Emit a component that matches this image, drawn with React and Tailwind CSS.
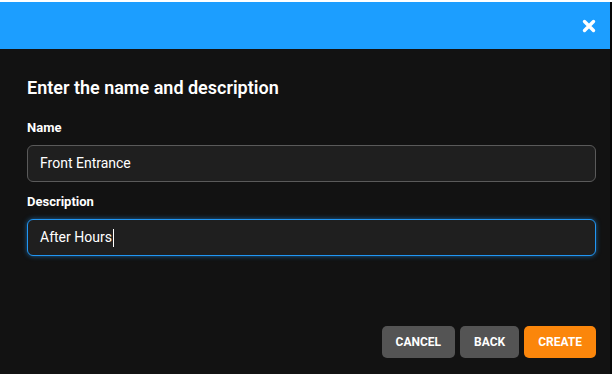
import React from "react";

// ── Close glyph (bold X) ──────────────────────────────────────────────────
function CloseIcon() {
  return (
    <svg width="14" height="14" viewBox="0 0 14 14" aria-hidden="true">
      <path
        d="M2.5 2.5 L11.5 11.5 M11.5 2.5 L2.5 11.5"
        stroke="#fff"
        strokeWidth="3.4"
        strokeLinecap="round"
      />
    </svg>
  );
}

function Field({ label, value, focused }) {
  return (
    <div className="flex flex-col">
      <label className="text-[13px] font-bold text-white leading-4 mb-[9px]">
        {label}
      </label>
      <div
        className={`h-[37px] rounded-[6px] bg-[#1f1f1f] flex items-center px-[12px] text-[14px] text-white ${
          focused
            ? "border border-[#2196f3] shadow-[0_0_5px_rgba(33,150,243,0.6)]"
            : "border border-[#5a5a5a]"
        }`}
      >
        <span>{value}</span>
        {focused && <span className="w-px h-[18px] bg-white ml-px" />}
      </div>
    </div>
  );
}

export default function App() {
  return (
    <div
      className="w-[612px] h-[374px] bg-white pt-[2px] overflow-hidden"
      style={{ fontFamily: "Roboto, 'Liberation Sans', sans-serif" }}
    >
      <div className="w-[612px] h-[372px] flex flex-col bg-[#121212] border-r-2 border-[#070707]">
        {/* ── Header ─────────────────────────────────────────── */}
        <div className="h-[47px] bg-[#1c9eff] flex items-center justify-end pr-[14px]">
          <button className="w-[14px] h-[14px] flex items-center justify-center">
            <CloseIcon />
          </button>
        </div>

        {/* ── Body ───────────────────────────────────────────── */}
        <div className="flex-1 flex flex-col pl-[27px] pr-[14px] pt-[27px]">
          <h2 className="text-[18px] font-semibold text-white leading-6 mb-[20px]">
            Enter the name and description
          </h2>
          <div className="flex flex-col gap-[12px]">
            <Field label="Name" value="Front Entrance" />
            <Field label="Description" value="After Hours" focused />
          </div>

          {/* ── Actions ────────────────────────────────────────── */}
          <div className="mt-auto mb-[16px] flex justify-end gap-[5px]">
            <button className="h-[32px] px-[14px] rounded-[5px] bg-[#545454] text-white text-[12px] font-bold uppercase">
              Cancel
            </button>
            <button className="h-[32px] px-[14px] rounded-[5px] bg-[#545454] text-white text-[12px] font-bold uppercase">
              Back
            </button>
            <button className="h-[32px] px-[14px] rounded-[5px] bg-[#fb860b] text-white text-[12px] font-bold uppercase">
              Create
            </button>
          </div>
        </div>
      </div>
    </div>
  );
}
